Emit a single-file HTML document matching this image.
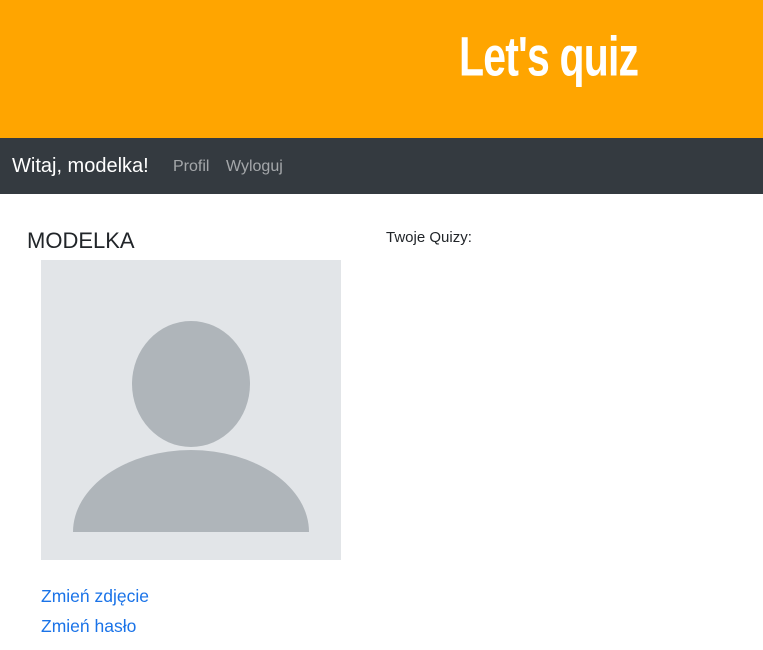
<!DOCTYPE html>
<html><head><style>
body{margin:0;width:763px;height:650px;overflow:hidden;font-family:"Liberation Sans",sans-serif;background:#fff;position:relative}
.hdr{position:absolute;left:0;top:0;width:763px;height:138px;background:#ffa500}
.title{position:absolute;left:459px;top:24px;font-family:"Liberation Sans Narrow","Liberation Sans",sans-serif;font-weight:bold;font-size:50px;color:#fff;transform:scaleX(0.82) scaleY(1.12);transform-origin:left top;letter-spacing:-1px;white-space:nowrap}
.nav{position:absolute;left:0;top:138px;width:763px;height:56px;background:#343a40}
.brand{position:absolute;left:12px;top:155px;font-size:20px;color:#fff}
.nl{position:absolute;top:158px;font-size:16px;color:rgba(255,255,255,.55)}
h2{position:absolute;left:27px;top:228px;margin:0;font-size:22px;font-weight:normal;color:#212529}
.tq{position:absolute;left:386px;top:229px;font-size:15px;color:#212529}
.av{position:absolute;left:41px;top:260px;width:300px;height:300px;background:#e2e5e8}
a{position:absolute;left:41px;font-size:17.5px;color:#1a73e8;text-decoration:none}
</style></head><body>
<div class="hdr"></div><div class="title">Let's quiz</div>
<div class="nav"></div>
<div class="brand">Witaj, modelka!</div>
<div class="nl" style="left:173px">Profil</div>
<div class="nl" style="left:226px">Wyloguj</div>
<h2>MODELKA</h2>
<div class="tq">Twoje Quizy:</div>
<div class="av"><svg width="300" height="300"><ellipse cx="150" cy="124" rx="59" ry="63" fill="#afb5ba"/><path d="M32 272 A118 82 0 0 1 268 272 Z" fill="#afb5ba"/></svg></div>
<a style="top:586px">Zmień zdjęcie</a>
<a style="top:616px">Zmień hasło</a>
</body></html>
